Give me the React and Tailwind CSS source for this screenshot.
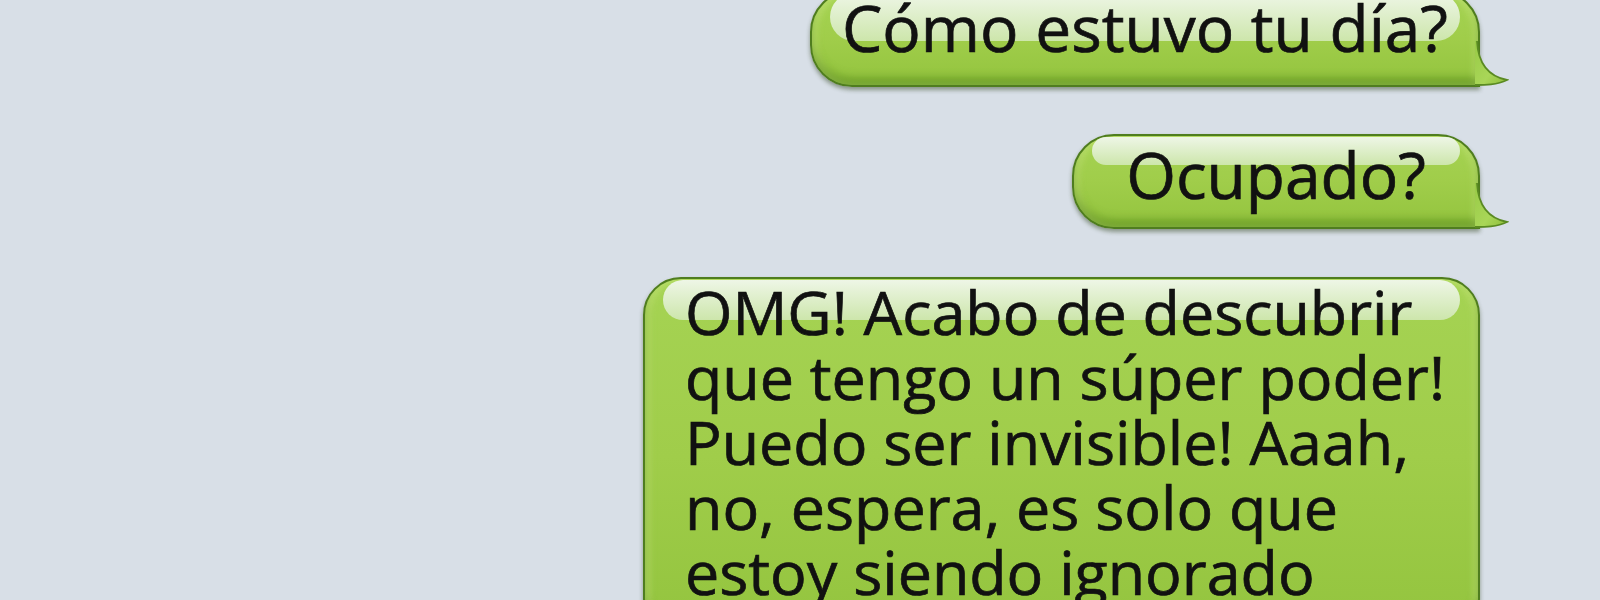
const Tail = () => (
  <svg
    className="absolute right-[-31px] bottom-[-2px]"
    width="34"
    height="46"
    viewBox="0 0 34 46"
  >
    <defs>
      <linearGradient id="tailFill" x1="0" y1="0" x2="1" y2="1">
        <stop offset="0" stopColor="#98ca46" />
        <stop offset="0.6" stopColor="#a9d658" />
        <stop offset="1" stopColor="#8dbd3a" />
      </linearGradient>
    </defs>
    <path
      d="M2 0 C3 20 12 35 32 39 C22 44 10 44 0 44 L0 0 Z"
      fill="url(#tailFill)"
    />
    <path
      d="M2 0 C3 20 12 35 32 39 C22 44 10 44 0 44"
      fill="none"
      stroke="#5a8a22"
      strokeWidth="1.8"
    />
  </svg>
);

const Bubble = ({ width, pad, gloss, tail, rounded, children }) => (
  <div
    className={`relative border-2 border-[#4f7d1f] bg-gradient-to-b from-[#a5d353] via-[#a0cd4a] to-[#93c43e] shadow-[inset_0_-7px_9px_rgba(70,120,15,0.5),inset_5px_0_6px_rgba(205,236,130,0.55),inset_-5px_0_6px_rgba(205,236,130,0.55),0_3px_4px_rgba(40,60,20,0.45)] ${rounded} ${width} ${pad}`}
  >
    <div
      className={`absolute left-[18px] right-[18px] top-[1px] rounded-[26px] bg-gradient-to-b from-[#eef6e6] to-[#cde6ab] ${gloss}`}
    />
    {tail && <Tail />}
    <div className="relative text-[#111111] [-webkit-text-stroke:0.7px_#111111]">
      {children}
    </div>
  </div>
);

const App = () => {
  return (
    <div
      className="w-full h-[600px] overflow-hidden bg-[#d8dfe7] flex flex-col items-end pr-[120px]"
      style={{ fontFamily: '"Open Sans", "Noto Sans", sans-serif' }}
    >
      <div className="mt-[-10px]">
        <Bubble
          width="w-[670px]"
          pad="pt-[3px] pb-[25px] text-center text-[64px] leading-[65px]"
          gloss="h-[48px]"
          rounded="rounded-[42px] rounded-br-none"
          tail
        >
          Cómo estuvo tu día?
        </Bubble>
      </div>
      <div className="mt-[47px]">
        <Bubble
          width="w-[408px]"
          pad="pt-[6px] pb-[20px] text-center text-[64px] leading-[65px]"
          gloss="h-[28px]"
          rounded="rounded-[42px] rounded-br-none"
          tail
        >
          Ocupado?
        </Bubble>
      </div>
      <div className="mt-[48px]">
        <Bubble
          width="w-[837px]"
          pad="pt-0 pl-[40px] pr-[14px] pb-[30px] text-left text-[61px] leading-[65px]"
          gloss="h-[40px]"
          rounded="rounded-[38px]"
        >
          OMG! Acabo de descubrir
          <br />
          que tengo un súper poder!
          <br />
          Puedo ser invisible! Aaah,
          <br />
          no, espera, es solo que
          <br />
          estoy siendo ignorado
        </Bubble>
      </div>
    </div>
  );
};

export default App;
